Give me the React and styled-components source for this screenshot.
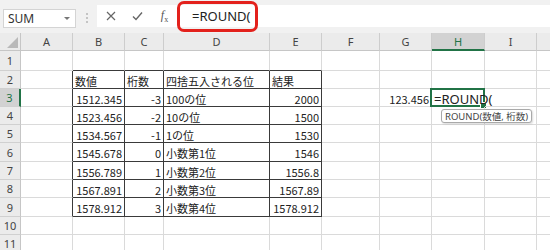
import React from 'react';
import styled, { createGlobalStyle } from 'styled-components';

const GlobalStyle = createGlobalStyle`
  body {
    margin: 0;
    background: #fff;
    overflow: hidden;
  }
`;

// J is off the right edge, its letter is not visible
const COLS = [
  { name: 'A', w: 52 },
  { name: 'B', w: 52 },
  { name: 'C', w: 39 },
  { name: 'D', w: 106 },
  { name: 'E', w: 52 },
  { name: 'F', w: 58 },
  { name: 'G', w: 52 },
  { name: 'H', w: 53 },
  { name: 'I', w: 52 },
  { name: '', w: 52 },
];

const ROW_H = [20, 18, 18, 18, 18, 19, 18, 18, 19, 18, 18, 18];

const DATA = {
  2: [null, '数値', '桁数', '四捨五入される位', '結果'],
  3: [null, '1512.345', '-3', '100の位', '2000', null, '123.456'],
  4: [null, '1523.456', '-2', '10の位', '1500'],
  5: [null, '1534.567', '-1', '1の位', '1530'],
  6: [null, '1545.678', '0', '小数第1位', '1546'],
  7: [null, '1556.789', '1', '小数第2位', '1556.8'],
  8: [null, '1567.891', '2', '小数第3位', '1567.89'],
  9: [null, '1578.912', '3', '小数第4位', '1578.912'],
};

const Window = styled.div`
  position: relative;
  width: 550px;
  height: 250px;
  overflow: hidden;
  font-family: "Noto Sans", "Noto Sans CJK JP", sans-serif;
`;

const FormulaBar = styled.div`
  display: flex;
  align-items: flex-start;
  height: 33px;
  background: #f1f1f1;
  box-sizing: border-box;
`;

const NameBox = styled.div`
  display: flex;
  align-items: center;
  justify-content: space-between;
  box-sizing: border-box;
  width: 73px;
  height: 19px;
  margin: 9px 0 0 3px;
  padding: 0 5px 0 4px;
  background: #fff;
  border: 1px solid #d4d4d4;
  font-size: 12px;
  color: #333;
`;

const Caret = styled.span`
  width: 0;
  height: 0;
  border-left: 3px solid transparent;
  border-right: 3px solid transparent;
  border-top: 3px solid #777;
`;

const Grip = styled.div`
  display: flex;
  flex-direction: column;
  gap: 2px;
  margin: 13px 0 0 10px;
  span {
    width: 2px;
    height: 2px;
    background: #c4c4c4;
  }
`;

const FormulaArea = styled.div`
  display: flex;
  align-items: center;
  flex: 1;
  height: 22px;
  margin: 5px 0 0 9px;
  background: #fff;
`;

const IconBtn = styled.div`
  display: flex;
  align-items: center;
  justify-content: center;
  width: 27px;
  height: 22px;
  color: #666;
`;

const Fx = styled.span`
  font-family: "Liberation Serif", serif;
  font-style: italic;
  font-size: 12px;
  color: #555;
  sub {
    font-size: 8px;
    font-style: normal;
  }
`;

const FormulaText = styled.div`
  margin-left: 14px;
  font-size: 13px;
  color: #222;
`;

const Callout = styled.div`
  position: absolute;
  left: 177px;
  top: 1px;
  width: 81px;
  height: 31px;
  box-sizing: border-box;
  border: 3px solid #e3211c;
  border-radius: 7px;
`;

const Sheet = styled.div`
  display: grid;
  grid-template-columns: 21px ${COLS.map((c) => c.w + 'px').join(' ')};
  grid-template-rows: 18px ${ROW_H.map((h) => h + 'px').join(' ')};
  background: #fff;
`;

const Corner = styled.div`
  position: relative;
  background: #ebebeb;
  border-right: 1px solid #c6c6c6;
  border-bottom: 1px solid #c6c6c6;
  &::after {
    content: '';
    position: absolute;
    right: 2px;
    bottom: 2px;
    border-left: 11px solid transparent;
    border-bottom: 11px solid #b9b9b9;
  }
`;

const ColHead = styled.div`
  display: flex;
  align-items: center;
  justify-content: center;
  box-sizing: border-box;
  background: ${({ $active }) => ($active ? '#d2d2d2' : '#ebebeb')};
  border-right: 1px solid #cdcdcd;
  border-bottom: ${({ $active }) => ($active ? '2px solid #217346' : '1px solid #c6c6c6')};
  font-size: 11px;
  color: ${({ $active }) => ($active ? '#217346' : '#444')};
`;

const RowHead = styled.div`
  display: flex;
  align-items: center;
  justify-content: center;
  box-sizing: border-box;
  background: ${({ $active }) => ($active ? '#d2d2d2' : '#ebebeb')};
  border-right: ${({ $active }) => ($active ? '2px solid #217346' : '1px solid #c6c6c6')};
  border-bottom: 1px solid #d0d0d0;
  font-size: 11px;
  color: ${({ $active }) => ($active ? '#217346' : '#444')};
`;

const Cell = styled.div`
  position: relative;
  display: flex;
  align-items: center;
  justify-content: ${({ $right }) => ($right ? 'flex-end' : 'flex-start')};
  box-sizing: border-box;
  padding: 2px 2px 0;
  border-right: 1px solid ${({ $darkR }) => ($darkR ? '#3a3a3a' : '#dadada')};
  border-bottom: 1px solid ${({ $darkB }) => ($darkB ? '#3a3a3a' : '#dadada')};
  font-family: "Noto Sans CJK JP", "Noto Sans", sans-serif;
  font-size: 11px;
  color: #222;
  white-space: nowrap;
`;

const EditText = styled.span`
  position: relative;
  z-index: 2;
  font-family: "Noto Sans", sans-serif;
  font-size: 13px;
  color: #222;
`;

const ActiveBox = styled.div`
  position: absolute;
  left: -2px;
  top: -1px;
  right: -1px;
  bottom: -1px;
  border: 2px solid #217346;
  &::after {
    content: '';
    position: absolute;
    right: -4px;
    bottom: -4px;
    width: 5px;
    height: 5px;
    background: #217346;
    border: 1px solid #fff;
  }
`;

const Tip = styled.div`
  position: absolute;
  z-index: 3;
  left: 9px;
  top: 20px;
  padding: 0 3px;
  height: 12px;
  display: flex;
  align-items: center;
  background: #fff;
  border: 1px solid #a9a9a9;
  border-radius: 3px;
  box-shadow: 1px 1px 2px rgba(0, 0, 0, 0.15);
  font-family: "Noto Sans", "Noto Sans CJK JP", sans-serif;
  font-size: 9.5px;
  color: #444;
  white-space: nowrap;
`;

const isNum = (v) => /^-?[\d.]+$/.test(v);

export default function App() {
  const rows = ROW_H.map((_, i) => i + 1);

  return (
    <>
      <GlobalStyle />
      <Window>
        <FormulaBar>
          <NameBox>
            SUM
            <Caret />
          </NameBox>
          <Grip>
            <span />
            <span />
            <span />
          </Grip>
          <FormulaArea>
            <IconBtn>
              <svg width="10" height="10" viewBox="0 0 10 10">
                <path d="M1 1L9 9M9 1L1 9" stroke="#666" strokeWidth="1.2" />
              </svg>
            </IconBtn>
            <IconBtn>
              <svg width="11" height="10" viewBox="0 0 11 10">
                <path d="M1 5.5L4 8.5L10 1.5" stroke="#666" strokeWidth="1.4" fill="none" />
              </svg>
            </IconBtn>
            <IconBtn>
              <Fx>
                f<sub>x</sub>
              </Fx>
            </IconBtn>
            <FormulaText>=ROUND(</FormulaText>
          </FormulaArea>
        </FormulaBar>
        <Callout />

        <Sheet>
          <Corner />
          {COLS.map((c, i) => (
            <ColHead key={i} $active={c.name === 'H'}>
              {c.name}
            </ColHead>
          ))}
          {rows.map((r) => (
            <React.Fragment key={r}>
              <RowHead $active={r === 3}>{r}</RowHead>
              {COLS.map((c, ci) => {
                const v = DATA[r] ? DATA[r][ci] : null;
                const inTable = r >= 2 && r <= 9;
                const darkR = inTable && ci <= 4;
                const darkB = ci >= 1 && ci <= 4 && r >= 1 && r <= 9;
                const active = r === 3 && c.name === 'H';
                return (
                  <Cell
                    key={ci}
                    $darkR={darkR}
                    $darkB={darkB}
                    $right={v != null && isNum(v)}
                  >
                    {active ? (
                      <>
                        <ActiveBox />
                        <EditText>=ROUND(</EditText>
                        <Tip>ROUND(数値, 桁数)</Tip>
                      </>
                    ) : (
                      v
                    )}
                  </Cell>
                );
              })}
            </React.Fragment>
          ))}
        </Sheet>
      </Window>
    </>
  );
}
